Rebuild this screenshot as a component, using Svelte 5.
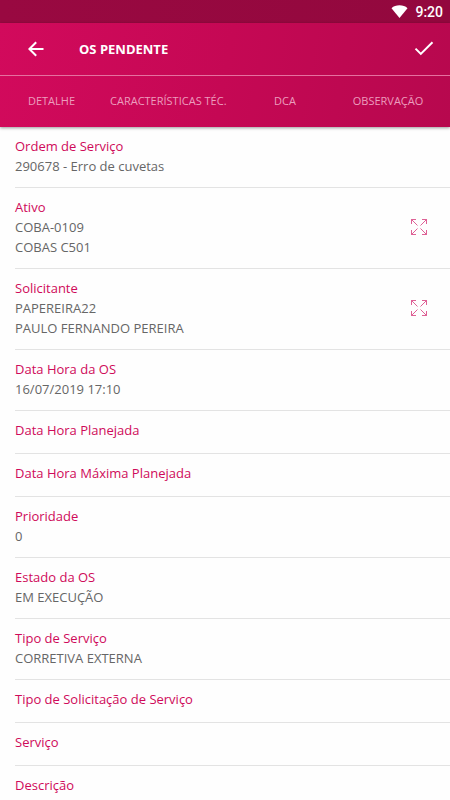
<script lang="ts">
	type Field = {
		label: string;
		values: string[];
		expandable?: boolean;
	};

	const tabs = ['Detalhe', 'Características Téc.', 'DCA', 'Observação'];

	const fields: Field[] = [
		{ label: 'Ordem de Serviço', values: ['290678 - Erro de cuvetas'] },
		{ label: 'Ativo', values: ['COBA-0109', 'COBAS C501'], expandable: true },
		{ label: 'Solicitante', values: ['PAPEREIRA22', 'PAULO FERNANDO PEREIRA'], expandable: true },
		{ label: 'Data Hora da OS', values: ['16/07/2019 17:10'] },
		{ label: 'Data Hora Planejada', values: [] },
		{ label: 'Data Hora Máxima Planejada', values: [] },
		{ label: 'Prioridade', values: ['0'] },
		{ label: 'Estado da OS', values: ['EM EXECUÇÃO'] },
		{ label: 'Tipo de Serviço', values: ['CORRETIVA EXTERNA'] },
		{ label: 'Tipo de Solicitação de Serviço', values: [] },
		{ label: 'Serviço', values: [] },
		{ label: 'Descrição', values: ['Erro de cuvetas'] }
	];

	let activeTab = $state('Detalhe');
</script>

<div class="screen">
	<div class="status-bar">
		<svg class="wifi" viewBox="0 0 18 14" aria-hidden="true">
			<path d="M9 14 0.4 3.4C2.6 1.4 5.6 0.4 9 0.4s6.4 1 8.6 3z" fill="#fff" />
		</svg>
		<span>9:20</span>
	</div>

	<header>
		<div class="toolbar">
			<button class="icon-button" aria-label="Voltar">
				<svg width="16" height="16" viewBox="0 0 16 16" fill="none" stroke="#fff" stroke-width="2">
					<path d="M15.5 8H1.8M8.2 1.2 1.4 8l6.8 6.8" />
				</svg>
			</button>
			<h1>OS PENDENTE</h1>
			<button class="icon-button" aria-label="Confirmar">
				<svg width="20" height="16" viewBox="0 0 20 16" fill="none" stroke="#fff" stroke-width="2">
					<path d="M1.5 7.6 6.8 12.9 18.5 1.2" />
				</svg>
			</button>
		</div>
		<nav>
			{#each tabs as tab}
				<button class="tab" aria-pressed={tab === activeTab} onclick={() => (activeTab = tab)}>{tab}</button>
			{/each}
		</nav>
	</header>

	<main>
		{#each fields as field}
			<section class="field">
				<div>
					<h2>{field.label}</h2>
					{#each field.values as value}
						<p>{value}</p>
					{/each}
				</div>
				{#if field.expandable}
					<button class="expand" aria-label={`Expandir ${field.label}`}>
						<svg width="16" height="16" viewBox="0 0 16 16" fill="none" stroke="#d63a7b" stroke-width="0.8">
							<path d="M6.5 6.5.5.5M.5 5V.5H5M9.5 6.5l6-6M11 .5h4.5V5M6.5 9.5l-6 6M.5 11v4.5H5M9.5 9.5l6 6M15.5 11v4.5H11" />
						</svg>
					</button>
				{/if}
			</section>
		{/each}
	</main>
</div>

<style>
	:global(body) {
		margin: 0;
		background: #fefefe;
	}

	.screen {
		display: flex;
		flex-direction: column;
		height: 100vh;
		font-family: 'Open Sans', sans-serif;
	}

	button {
		display: flex;
		align-items: center;
		justify-content: center;
		padding: 0;
		border: none;
		background: none;
		font-family: inherit;
		cursor: pointer;
	}

	.status-bar {
		display: flex;
		flex: none;
		align-items: center;
		justify-content: flex-end;
		gap: 7px;
		height: 23px;
		padding-right: 7px;
		background: linear-gradient(90deg, #990941, #93083e);
		color: #fff;
		font: 500 14px Roboto, sans-serif;
	}

	.wifi {
		width: 17px;
		height: 13px;
	}

	header {
		position: relative;
		flex: none;
		background: linear-gradient(100deg, #d20a5c, #c50854 50%, #b7084e);
		box-shadow: 0 1px 3px rgba(0, 0, 0, 0.4);
	}

	.toolbar {
		display: flex;
		align-items: center;
		height: 52px;
		padding: 0 8px 0 18px;
		border-bottom: 1px solid #e5719f;
	}

	.icon-button {
		width: 36px;
		height: 36px;
	}

	h1 {
		flex: 1;
		margin: 0 0 0 25px;
		color: #fff;
		font-size: 13px;
		font-weight: 700;
	}

	nav {
		display: flex;
		height: 51px;
		overflow: hidden;
	}

	.tab {
		flex: none;
		min-width: 103px;
		padding: 0 7px 3px;
		color: #ec9dbd;
		font-size: 11px;
		text-transform: uppercase;
	}

	main {
		flex: 1;
		min-height: 0;
		padding-left: 15px;
		overflow-y: auto;
		scrollbar-width: none;
	}

	.field {
		display: flex;
		align-items: flex-start;
		justify-content: space-between;
		box-sizing: border-box;
		min-height: 43px;
		padding: 9px 19px 11px 0;
		border-bottom: 1px solid #e3e3e3;
	}

	h2,
	p {
		margin: 0;
		font-size: 13px;
		font-weight: 400;
		line-height: 20px;
	}

	h2 {
		color: #cf0a5a;
	}

	p {
		color: #666;
	}

	.expand {
		align-self: center;
		width: 24px;
		height: 24px;
	}
</style>
